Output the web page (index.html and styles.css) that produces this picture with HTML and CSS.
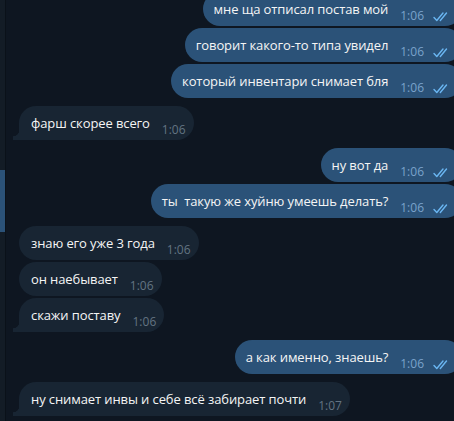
FILE: index.html
```html
<!DOCTYPE html>
<html lang="ru">
<head>
<meta charset="utf-8">
<link rel="stylesheet" href="styles.css">
</head>
<body>
<div class="app">
  <aside class="side">
    <div class="side-active"></div>
  </aside>
  <main class="chat">
    <div class="group out first">
      <div class="msg out"><span class="text">мне ща отписал постав мой</span><span class="time">1:06</span><svg class="checks" viewBox="0 0 17 11"><path d="M1 6.5 L3.8 9.5 L10 2"/><path d="M7.3 9.5 L13.5 2"/></svg></div>
      <div class="msg out"><span class="text">говорит какого-то типа увидел</span><span class="time">1:06</span><svg class="checks" viewBox="0 0 17 11"><path d="M1 6.5 L3.8 9.5 L10 2"/><path d="M7.3 9.5 L13.5 2"/></svg></div>
      <div class="msg out"><span class="text">который инвентари снимает бля</span><span class="time">1:06</span><svg class="checks" viewBox="0 0 17 11"><path d="M1 6.5 L3.8 9.5 L10 2"/><path d="M7.3 9.5 L13.5 2"/></svg></div>
    </div>
    <div class="group in">
      <div class="msg in tail"><span class="text">фарш скорее всего</span><span class="time">1:06</span></div>
    </div>
    <div class="group out">
      <div class="msg out"><span class="text">ну вот да</span><span class="time">1:06</span><svg class="checks" viewBox="0 0 17 11"><path d="M1 6.5 L3.8 9.5 L10 2"/><path d="M7.3 9.5 L13.5 2"/></svg></div>
      <div class="msg out"><span class="text">ты&nbsp; такую же хуйню умеешь делать?</span><span class="time">1:06</span><svg class="checks" viewBox="0 0 17 11"><path d="M1 6.5 L3.8 9.5 L10 2"/><path d="M7.3 9.5 L13.5 2"/></svg></div>
    </div>
    <div class="group in">
      <div class="msg in"><span class="text">знаю его уже 3 года</span><span class="time">1:06</span></div>
      <div class="msg in"><span class="text">он наебывает</span><span class="time">1:06</span></div>
      <div class="msg in tail"><span class="text">скажи поставу</span><span class="time">1:06</span></div>
    </div>
    <div class="group out">
      <div class="msg out"><span class="text">а как именно, знаешь?</span><span class="time">1:06</span><svg class="checks" viewBox="0 0 17 11"><path d="M1 6.5 L3.8 9.5 L10 2"/><path d="M7.3 9.5 L13.5 2"/></svg></div>
    </div>
    <div class="group in">
      <div class="msg in tail"><span class="text">ну снимает инвы и себе всё забирает почти</span><span class="time">1:07</span></div>
    </div>
  </main>
</div>
</body>
</html>
```

FILE: styles.css
```css
html, body {
  margin: 0;
  padding: 0;
  width: 454px;
  height: 421px;
  overflow: hidden;
  background: #0e1621;
}

.app {
  display: flex;
  height: 421px;
  font-family: "Open Sans", "Noto Sans", sans-serif;
  color: #f5f5f5;
}

.side {
  width: 6px;
  flex: 0 0 6px;
  background: #131c26;
  border-right: 1px solid #0a1119;
  padding-top: 170px;
  box-sizing: border-box;
}

.side-active {
  height: 62px;
  width: 5px;
  background: #2b5278;
}

.chat {
  flex: 1;
  display: flex;
  flex-direction: column;
  gap: 8px;
  margin-top: -8px;
  margin-right: -8px;
  padding-left: 13px;
}

.group {
  display: flex;
  flex-direction: column;
  gap: 2px;
}

.group.out { align-items: flex-end; }
.group.in { align-items: flex-start; }

.msg {
  position: relative;
  display: flex;
  align-items: flex-end;
  height: 34px;
  box-sizing: border-box;
  padding: 8px 12px 8px 12px;
  border-radius: 17px;
  font-size: 13px;
  line-height: 17px;
  white-space: nowrap;
}

.msg.out {
  background: #2b5278;
  padding-left: 11px;
  padding-right: 12px;
}

.msg.in {
  background: #182533;
  padding-right: 8px;
}

.msg.in.tail {
  border-bottom-left-radius: 0;
}

.msg.in.tail::before {
  content: "";
  position: absolute;
  left: -6px;
  bottom: 0;
  width: 6px;
  height: 10px;
  background: radial-gradient(circle at 0 0, transparent 6px, #182533 6.6px);
}

.text {
  letter-spacing: -0.1px;
}

.time {
  font-size: 12px;
  line-height: 14px;
  margin-left: 12px;
  margin-bottom: -5px;
}

.msg.out .time { color: #7aa2cb; }
.msg.in .time { color: #637482; }

.checks {
  width: 17px;
  height: 11px;
  margin-left: 9px;
  margin-bottom: -4px;
  fill: none;
  stroke: #6ab6f2;
  stroke-width: 1.4;
  stroke-linecap: round;
  stroke-linejoin: round;
}
```
